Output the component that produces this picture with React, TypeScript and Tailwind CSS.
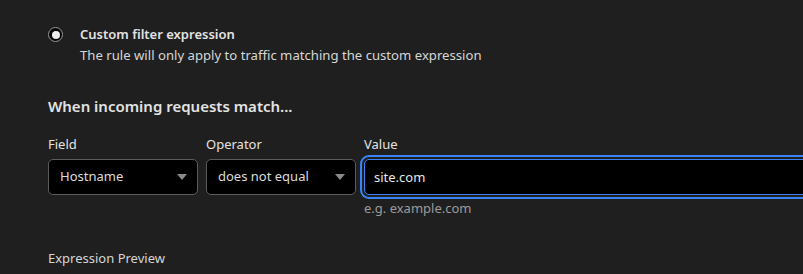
import React, { useState } from "react";

const FIELDS = ["Hostname", "URI Path", "IP Source Address"];
const OPERATORS = ["equals", "does not equal", "contains"];

function Select({ value }: { value: string }) {
  return (
    <div className="flex h-[36px] w-[150px] items-center justify-between rounded-[5px] border border-[#5c5c5c] bg-black pl-[11px] pr-[10px] text-[13px] text-[#dcdcdc]">
      <span>{value}</span>
      <svg width="10" height="6" viewBox="0 0 10 6" className="mb-[1px]">
        <path d="M0 0h10L5 6z" fill="#8a8a8a" />
      </svg>
    </div>
  );
}

export default function App() {
  const [value, setValue] = useState("site.com");

  return (
    <div className="h-[274px] w-[803px] overflow-hidden bg-[#1f1f1f] pl-[48px] pt-[24px] font-['Noto_Sans',sans-serif] text-[#e3e3e3]">
      <div className="flex items-start gap-[17px]">
        <div className="mt-[3px] flex h-[15px] w-[15px] items-center justify-center rounded-full border border-[#9a9a9a] bg-black">
          <div className="h-[8px] w-[8px] rounded-full bg-[#ececec]" />
        </div>
        <div className="flex flex-col">
          <span className="text-[13px] font-semibold leading-[20px]">Custom filter expression</span>
          <span className="text-[13.15px] leading-[22px] text-[#d6d6d6]">
            The rule will only apply to traffic matching the custom expression
          </span>
        </div>
      </div>

      <h3 className="mt-[29px] text-[15px] font-semibold leading-[22px]">When incoming requests match...</h3>

      <div className="mt-[18px] flex gap-[8px]">
        <div className="flex flex-col gap-[6px]">
          <label className="text-[13px] leading-[18px]">Field</label>
          <Select value={FIELDS[0]} />
        </div>
        <div className="flex flex-col gap-[6px]">
          <label className="text-[13px] leading-[18px]">Operator</label>
          <Select value={OPERATORS[1]} />
        </div>
        <div className="flex flex-1 flex-col gap-[6px]">
          <label className="text-[13px] leading-[18px]">Value</label>
          <input
            value={value}
            onChange={(e) => setValue(e.target.value)}
            className="h-[36px] w-[460px] rounded-[5px] border border-[#3b82f6] bg-black px-[9px] text-[13px] text-[#e6e6e6] outline-none ring-2 ring-[#3b82f6] ring-offset-2 ring-offset-[#1f1f1f]"
          />
          <span className="-mt-[2px] text-[13px] leading-[18px] text-[#9b9b9b]">e.g. example.com</span>
        </div>
      </div>

      <div className="mt-[32px] text-[13px] leading-[18px] text-[#d6d6d6]">Expression Preview</div>
    </div>
  );
}
